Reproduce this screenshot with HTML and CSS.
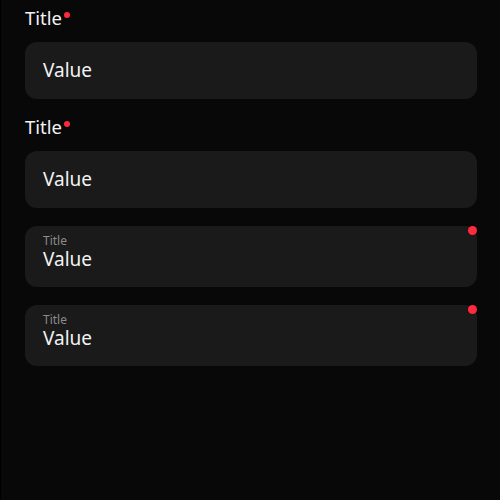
FILE: index.html
```html
<!DOCTYPE html>
<html lang="en">
<head>
    <meta charset="UTF-8">
    <meta name="viewport" content="width=device-width, initial-scale=1.0">
    <title>Fields</title>
    <link rel="stylesheet" href="styles.css">
</head>
<body>
    <div class="container">
        <!-- Label above the field -->
        <div class="field">
            <div class="field-label">Title<span class="required"></span></div>
            <div class="field-box">Value</div>
        </div>
        <div class="field">
            <div class="field-label">Title<span class="required"></span></div>
            <div class="field-box">Value</div>
        </div>

        <!-- Label inside the field -->
        <div class="field inline">
            <div class="field-box">
                <div class="inner-label">Title</div>
                <div class="inner-value">Value</div>
                <span class="corner-dot"></span>
            </div>
        </div>
        <div class="field inline">
            <div class="field-box">
                <div class="inner-label">Title</div>
                <div class="inner-value">Value</div>
                <span class="corner-dot"></span>
            </div>
        </div>
    </div>
</body>
</html>
```

FILE: styles.css
```css
html, body {
    height: 100%;
}
body {
    margin: 0;
    background-color: #080808;
    border-left: 1px solid #000;
    font-family: "Noto Sans", sans-serif;
    color: #f2f2f2;
}
.container {
    padding: 6px 23px 0 24px;
    display: flex;
    flex-direction: column;
    gap: 18px;
}
.field-label {
    font-size: 18.5px;
    line-height: 24px;
    margin-bottom: 12px;
    display: flex;
    align-items: flex-start;
}
.required {
    width: 6px;
    height: 6px;
    border-radius: 50%;
    background-color: #ff2a3c;
    margin: 6px 0 0 2px;
}
.field-box {
    position: relative;
    background-color: #1a1a1a;
    border-radius: 12px;
    height: 57px;
    padding: 0 18px 2px;
    display: flex;
    align-items: center;
    font-size: 19px;
    box-sizing: border-box;
}
.field + .field:not(.inline) {
    margin-top: -2px;
}
.inline .field-box {
    height: 61px;
    padding-top: 9px;
    flex-direction: column;
    align-items: flex-start;
    justify-content: flex-start;
}
.inner-label {
    font-size: 12px;
    line-height: 12px;
    color: #8c8c8c;
}
.inner-value {
    font-size: 19px;
    line-height: 20px;
    margin-top: 2px;
}
.corner-dot {
    position: absolute;
    top: 0;
    right: 0;
    width: 9px;
    height: 9px;
    border-radius: 50%;
    background-color: #ff2a3c;
}
```
